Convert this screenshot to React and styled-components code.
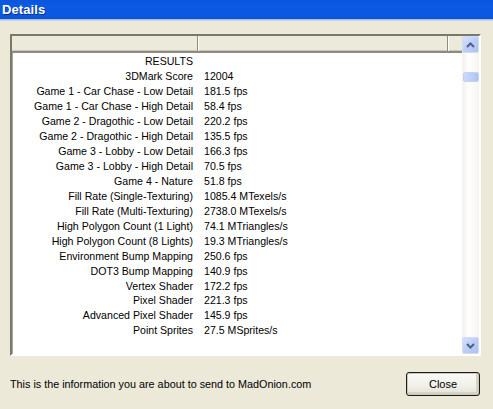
import React from 'react'
import styled, { createGlobalStyle } from 'styled-components'

const GlobalStyle = createGlobalStyle`
  html, body {
    margin: 0;
    padding: 0;
    background: #ece9d8;
  }
  body {
    font-family: "Liberation Sans", Arial, sans-serif;
    overflow: hidden;
  }
`

const Window = styled.div`
  width: 493px;
  height: 409px;
  display: flex;
  flex-direction: column;
  background: #ece9d8;
`

const TitleBar = styled.div`
  height: 21px;
  box-sizing: border-box;
  display: flex;
  align-items: center;
  padding: 0 0 2px 2px;
  background: linear-gradient(
    to bottom,
    #0a55dc 0%,
    #0c5ae4 30%,
    #0a58e0 80%,
    #0750d6 90%,
    #9fb6de 91%,
    #d8dcdc 100%
  );
  color: #fff;
  font-weight: bold;
  font-size: 13px;
  letter-spacing: 0.1px;
  text-shadow: 1px 1px 0 #0a2f8a;
`

const ListBox = styled.div`
  margin: 13px 12px 0 10px;
  height: 322px;
  box-sizing: border-box;
  border-style: solid;
  border-width: 2px;
  border-color: #7a7869 #ffffff #ffffff #7a7869;
  box-shadow: inset 1px 1px 0 #aca899;
  background: #fff;
  display: flex;
`

const ListMain = styled.div`
  width: 450px;
  display: flex;
  flex-direction: column;
`

const Header = styled.div`
  height: 17px;
  box-sizing: border-box;
  display: flex;
  background: #ebeadb;
  border-bottom: 2px solid #8e8c80;
  box-shadow: inset 0 -1px 0 #cbc7b8;
`

const HeaderCell = styled.div`
  width: ${p => p.w}px;
  box-sizing: border-box;
  border-right: ${p => (p.last ? 'none' : '1px solid #8e8c80')};
  box-shadow: ${p => (p.last ? 'none' : '1px 0 0 #ffffff')};
`

const Rows = styled.div`
  padding-top: 1px;
  display: flex;
  flex-direction: column;
`

const Row = styled.div`
  height: 14.94px;
  display: flex;
  align-items: center;
  font-size: 10.6px;
  color: #000;
  white-space: nowrap;
`

const Label = styled.div`
  width: 187px;
  box-sizing: border-box;
  padding-right: 6px;
  text-align: right;
`

const Value = styled.div`
  padding-left: 5px;
`

const ScrollBar = styled.div`
  width: 17px;
  display: flex;
  flex-direction: column;
  background: linear-gradient(to right, #f3f1ec, #fefefe 40%, #f5f4ef);
`

const ScrollButton = styled.div`
  width: 17px;
  height: 17px;
  box-sizing: border-box;
  border: 1px solid #d2dbf2;
  border-radius: 2px;
  background: linear-gradient(135deg, #d6e1fc 0%, #bccef8 50%, #adc1f1 100%);
  display: flex;
  align-items: center;
  justify-content: center;
`

const Track = styled.div`
  flex: 1;
  padding-top: 19px;
  display: flex;
  flex-direction: column;
  align-items: center;
`

const Thumb = styled.div`
  width: 16px;
  height: 10px;
  box-sizing: border-box;
  border: 1px solid #c4d1f1;
  border-radius: 2px;
  background: linear-gradient(to right, #cbd9fb, #bccdf7 60%, #afc2f1);
`

const Footer = styled.div`
  margin-top: 16px;
  padding: 0 13px 0 10px;
  height: 24px;
  display: flex;
  align-items: center;
  justify-content: space-between;
`

const FooterText = styled.div`
  font-size: 10.8px;
  color: #000;
`

const CloseButton = styled.button`
  width: 74px;
  height: 24px;
  box-sizing: border-box;
  border: 1px solid #1c1c1c;
  border-radius: 3px;
  box-shadow: inset 0 0 0 1px #c9c7ba, inset -1px -1px 0 2px #d6d3c4;
  background: linear-gradient(to bottom, #fbfbf7, #f0efe8 60%, #e3e1d6);
  font-family: "Liberation Sans", Arial, sans-serif;
  font-size: 11px;
  color: #000;
  padding: 0;
`

function Chevron({ down }) {
  return (
    <svg width="9" height="6" viewBox="0 0 9 6">
      <polyline
        points={down ? '1,1 4.5,4.5 8,1' : '1,5 4.5,1.5 8,5'}
        fill="none"
        stroke="#4d6185"
        strokeWidth="2"
      />
    </svg>
  )
}

const results = [
  ['RESULTS', ''],
  ['3DMark Score', '12004'],
  ['Game 1 - Car Chase - Low Detail', '181.5 fps'],
  ['Game 1 - Car Chase - High Detail', '58.4 fps'],
  ['Game 2 - Dragothic - Low Detail', '220.2 fps'],
  ['Game 2 - Dragothic - High Detail', '135.5 fps'],
  ['Game 3 - Lobby - Low Detail', '166.3 fps'],
  ['Game 3 - Lobby - High Detail', '70.5 fps'],
  ['Game 4 - Nature', '51.8 fps'],
  ['Fill Rate (Single-Texturing)', '1085.4 MTexels/s'],
  ['Fill Rate (Multi-Texturing)', '2738.0 MTexels/s'],
  ['High Polygon Count (1 Light)', '74.1 MTriangles/s'],
  ['High Polygon Count (8 Lights)', '19.3 MTriangles/s'],
  ['Environment Bump Mapping', '250.6 fps'],
  ['DOT3 Bump Mapping', '140.9 fps'],
  ['Vertex Shader', '172.2 fps'],
  ['Pixel Shader', '221.3 fps'],
  ['Advanced Pixel Shader', '145.9 fps'],
  ['Point Sprites', '27.5 MSprites/s'],
]

export default function App() {
  return (
    <>
      <GlobalStyle />
      <Window>
        <TitleBar>Details</TitleBar>

        <ListBox>
          <ListMain>
            <Header>
              <HeaderCell w={186} />
              <HeaderCell w={250} />
              <HeaderCell w={14} last />
            </Header>
            <Rows>
              {results.map(([label, value], idx) => (
                <Row key={idx}>
                  <Label>{label}</Label>
                  <Value>{value}</Value>
                </Row>
              ))}
            </Rows>
          </ListMain>

          <ScrollBar>
            <ScrollButton>
              <Chevron />
            </ScrollButton>
            <Track>
              <Thumb />
            </Track>
            <ScrollButton>
              <Chevron down />
            </ScrollButton>
          </ScrollBar>
        </ListBox>

        <Footer>
          <FooterText>This is the information you are about to send to MadOnion.com</FooterText>
          <CloseButton>Close</CloseButton>
        </Footer>
      </Window>
    </>
  )
}
